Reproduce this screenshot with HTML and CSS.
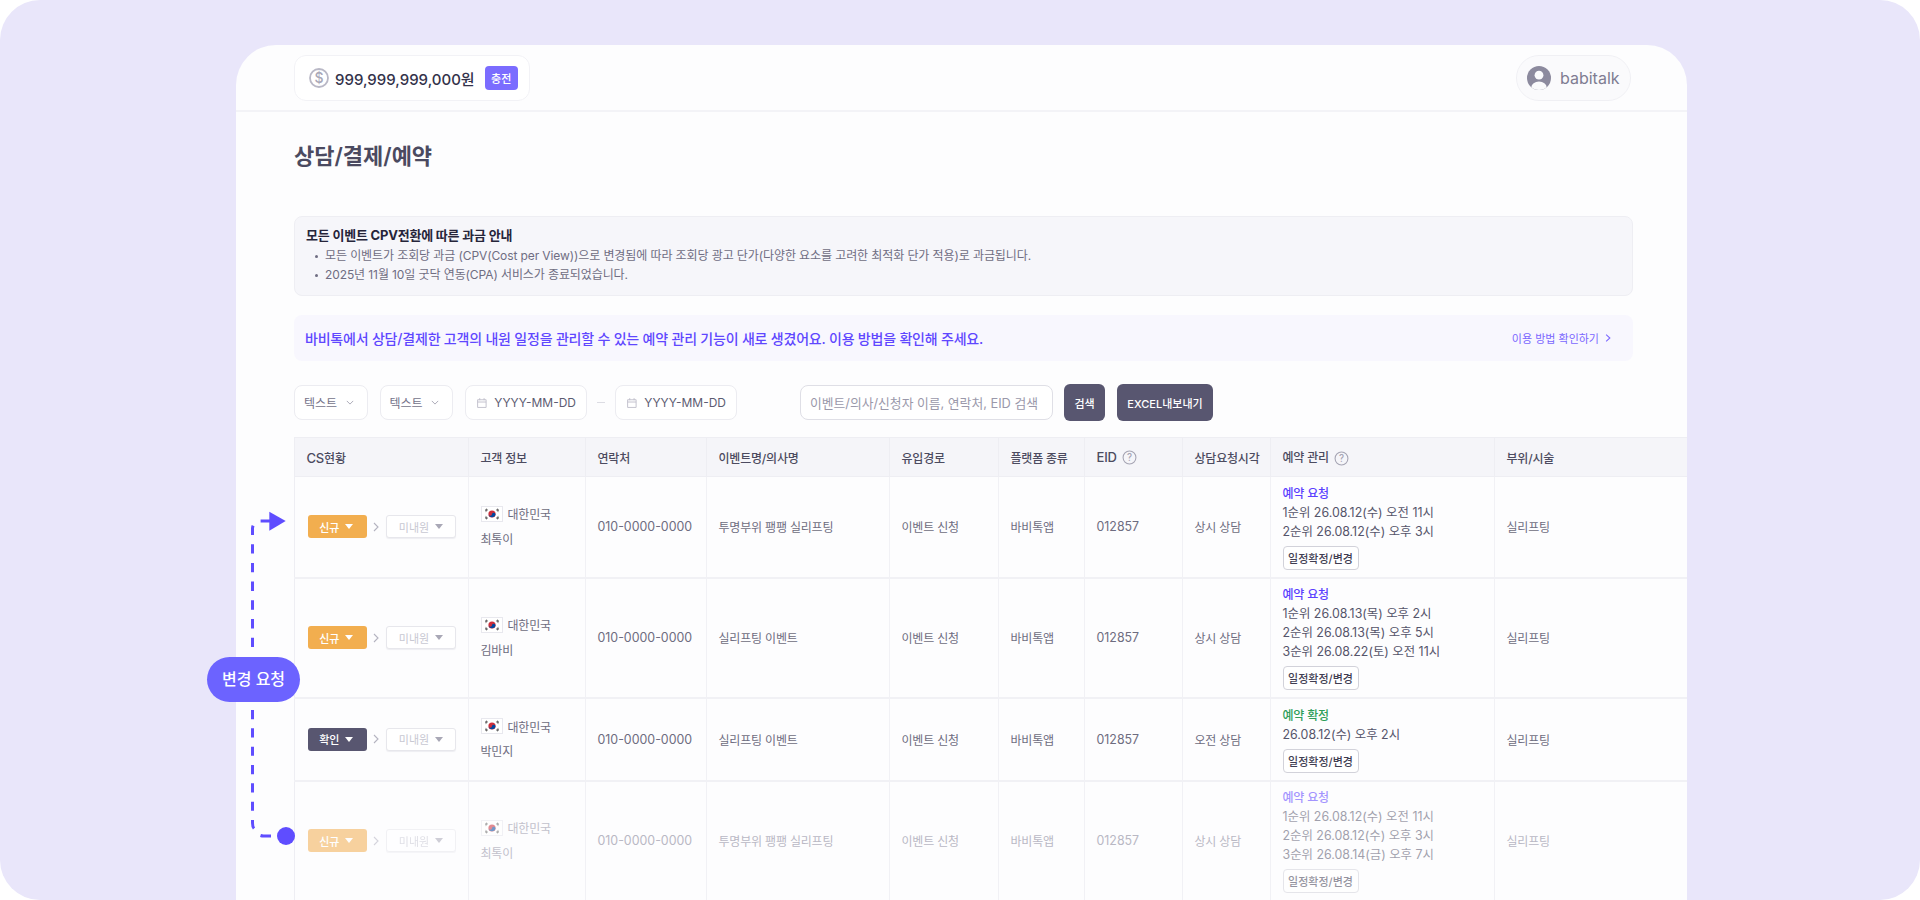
FILE: index.html
```html
<!DOCTYPE html>
<html lang="ko">
<head>
<meta charset="utf-8">
<title>상담/결제/예약</title>
<link rel="stylesheet" href="styles.css">
</head>
<body>
<div class="stage">
  <main class="window">
    <header class="topbar">
      <div class="wallet">
        <svg class="coin" viewBox="0 0 20 20" width="20" height="20"><circle cx="10" cy="10" r="9" fill="none" stroke="#b9b8c6" stroke-width="1.800"/><text x="10" y="14.800" text-anchor="middle" class="coin-text">$</text></svg>
        <span class="amount">999,999,999,000원</span>
        <button class="charge">충전</button>
      </div>
      <div class="user">
        <svg viewBox="0 0 24 24" width="24" height="24"><defs><clipPath id="uc"><circle cx="12" cy="12" r="12"/></clipPath></defs><circle cx="12" cy="12" r="12" fill="#8c8a9e"/><g clip-path="url(#uc)"><circle cx="12" cy="9.200" r="4.400" fill="#fafafc"/><ellipse cx="12" cy="21" rx="7.600" ry="5.400" fill="#fafafc"/></g></svg>
        <span>babitalk</span>
      </div>
    </header>
    <section class="content">
      <h1 class="title">상담/결제/예약</h1>
      <div class="notice">
        <strong>모든 이벤트 CPV전환에 따른 과금 안내</strong>
        <ul>
          <li>모든 이벤트가 조회당 과금 (CPV(Cost per View))으로 변경됨에 따라 조회당 광고 단가(다양한 요소를 고려한 최적화 단가 적용)로 과금됩니다.</li>
          <li>2025년 11월 10일 굿닥 연동(CPA) 서비스가 종료되었습니다.</li>
        </ul>
      </div>
      <div class="banner">
        <span class="banner-text">바비톡에서 상담/결제한 고객의 내원 일정을 관리할 수 있는 예약 관리 기능이 새로 생겼어요. 이용 방법을 확인해 주세요.</span>
        <a class="banner-link">이용 방법 확인하기
          <svg viewBox="0 0 8 12" width="6" height="10"><path d="M1.500 1.500 6.500 6l-5 4.500" fill="none" stroke="#7a66ff" stroke-width="1.400"/></svg>
        </a>
      </div>
      <div class="filters">
        <div class="control select">텍스트<svg viewBox="0 0 10 6" width="8" height="5"><path d="M1 1l4 4 4-4" fill="none" stroke="#a9a8b6" stroke-width="1.200"/></svg></div>
        <div class="control select">텍스트<svg viewBox="0 0 10 6" width="8" height="5"><path d="M1 1l4 4 4-4" fill="none" stroke="#a9a8b6" stroke-width="1.200"/></svg></div>
        <div class="control date"><svg viewBox="0 0 14 14" width="14" height="14"><path d="M2 3h10.500v9.500H2zM2 5.800h10.500M4.600 1v2.500M10 1v2.500" fill="none" stroke="#bdbcc9" stroke-width="1.100"/></svg>YYYY-MM-DD</div>
        <span class="dash"></span>
        <div class="control date"><svg viewBox="0 0 14 14" width="14" height="14"><path d="M2 3h10.500v9.500H2zM2 5.800h10.500M4.600 1v2.500M10 1v2.500" fill="none" stroke="#bdbcc9" stroke-width="1.100"/></svg>YYYY-MM-DD</div>
        <div class="control search">이벤트/의사/신청자 이름, 연락처, EID 검색</div>
        <button class="action search-btn">검색</button>
        <button class="action excel">EXCEL내보내기</button>
      </div>
      <table class="grid">
        <colgroup>
          <col class="c1"><col class="c2"><col class="c3"><col class="c4"><col class="c5"><col class="c6"><col class="c7"><col class="c8"><col class="c9"><col class="c10">
        </colgroup>
        <thead>
          <tr>
            <th><span class="lat">CS</span>현황</th><th>고객 정보</th><th>연락처</th><th>이벤트명/의사명</th><th>유입경로</th><th>플랫폼 종류</th>
            <th><span class="lat">EID</span> <svg class="help" viewBox="0 0 14 14" width="15" height="15"><circle cx="7" cy="7" r="6" fill="none" stroke="#a5a4b3"/><text x="7" y="10" text-anchor="middle" class="help-text">?</text></svg></th>
            <th>상담요청시각</th>
            <th>예약 관리 <svg class="help" viewBox="0 0 14 14" width="15" height="15"><circle cx="7" cy="7" r="6" fill="none" stroke="#a5a4b3"/><text x="7" y="10" text-anchor="middle" class="help-text">?</text></svg></th>
            <th>부위/시술</th>
          </tr>
        </thead>
        <tbody>
          <tr class="r1">
            <td><div class="status"><span class="chip new">신규<i class="caret"></i></span><svg class="next" viewBox="0 0 6 10" width="6" height="10"><path d="M1 1l4 4-4 4" fill="none" stroke="#b4b3c0" stroke-width="1.100"/></svg><span class="chip off">미내원<i class="caret"></i></span></div></td>
            <td><div class="country"><svg class="flag" viewBox="0 0 22 16" width="22" height="16"><use href="#kr"/></svg>대한민국</div><div class="person">최톡이</div></td>
            <td class="num">010-0000-0000</td><td>투명부위 팽팽 실리프팅</td><td>이벤트 신청</td><td>바비톡앱</td><td class="num">012857</td><td>상시 상담</td>
            <td><div class="res"><b class="req">예약 요청</b><p>1순위 26.08.12(수) 오전 11시</p><p>2순위 26.08.12(수) 오후 3시</p><button class="manage">일정확정/변경</button></div></td>
            <td>실리프팅</td>
          </tr>
          <tr class="r2">
            <td><div class="status"><span class="chip new">신규<i class="caret"></i></span><svg class="next" viewBox="0 0 6 10" width="6" height="10"><path d="M1 1l4 4-4 4" fill="none" stroke="#b4b3c0" stroke-width="1.100"/></svg><span class="chip off">미내원<i class="caret"></i></span></div></td>
            <td><div class="country"><svg class="flag" viewBox="0 0 22 16" width="22" height="16"><use href="#kr"/></svg>대한민국</div><div class="person">김바비</div></td>
            <td class="num">010-0000-0000</td><td>실리프팅 이벤트</td><td>이벤트 신청</td><td>바비톡앱</td><td class="num">012857</td><td>상시 상담</td>
            <td><div class="res"><b class="req">예약 요청</b><p>1순위 26.08.13(목) 오후 2시</p><p>2순위 26.08.13(목) 오후 5시</p><p>3순위 26.08.22(토) 오전 11시</p><button class="manage">일정확정/변경</button></div></td>
            <td>실리프팅</td>
          </tr>
          <tr class="r3">
            <td><div class="status"><span class="chip seen">확인<i class="caret"></i></span><svg class="next" viewBox="0 0 6 10" width="6" height="10"><path d="M1 1l4 4-4 4" fill="none" stroke="#b4b3c0" stroke-width="1.100"/></svg><span class="chip off">미내원<i class="caret"></i></span></div></td>
            <td><div class="country"><svg class="flag" viewBox="0 0 22 16" width="22" height="16"><use href="#kr"/></svg>대한민국</div><div class="person">박민지</div></td>
            <td class="num">010-0000-0000</td><td>실리프팅 이벤트</td><td>이벤트 신청</td><td>바비톡앱</td><td class="num">012857</td><td>오전 상담</td>
            <td><div class="res"><b class="ok">예약 확정</b><p>26.08.12(수) 오후 2시</p><button class="manage">일정확정/변경</button></div></td>
            <td>실리프팅</td>
          </tr>
          <tr class="r4 faded">
            <td><div class="status"><span class="chip new">신규<i class="caret"></i></span><svg class="next" viewBox="0 0 6 10" width="6" height="10"><path d="M1 1l4 4-4 4" fill="none" stroke="#b4b3c0" stroke-width="1.100"/></svg><span class="chip off">미내원<i class="caret"></i></span></div></td>
            <td><div class="country"><svg class="flag" viewBox="0 0 22 16" width="22" height="16"><use href="#kr"/></svg>대한민국</div><div class="person">최톡이</div></td>
            <td class="num">010-0000-0000</td><td>투명부위 팽팽 실리프팅</td><td>이벤트 신청</td><td>바비톡앱</td><td class="num">012857</td><td>상시 상담</td>
            <td><div class="res"><b class="req">예약 요청</b><p>1순위 26.08.12(수) 오전 11시</p><p>2순위 26.08.12(수) 오후 3시</p><p>3순위 26.08.14(금) 오후 7시</p><button class="manage">일정확정/변경</button></div></td>
            <td>실리프팅</td>
          </tr>
        </tbody>
      </table>
    </section>
  </main>
  <svg class="flow" viewBox="230 505 70 340" width="70" height="340">
    <path d="M270 521H260a7.500 7.500 0 0 0-7.500 7.500V655" class="flow-line"/>
    <path d="M252.500 710V820" class="flow-line low"/>
    <path d="M252.500 820v3q0 4 1.500 5.500" class="flow-solid"/>
    <path d="M260.500 835.500q1.500 .5 3 .5H271" class="flow-solid"/>
    <path d="M269.300 511.700 285.700 521 269.300 530.700z" class="flow-fill"/>
    <circle cx="286" cy="836" r="9" class="flow-fill"/>
  </svg>
  <div class="tag">변경 요청</div>
  <svg class="defs" width="0" height="0">
    <symbol id="kr" viewBox="0 0 22 16">
      <rect x=".5" y=".5" width="21" height="15" fill="#fff" stroke="#e8e8ee"/>
      <circle cx="11" cy="8" r="3.600" fill="#cd2e3a"/>
      <path d="M7.500 8.600a3.600 3.600 0 0 0 7 0 1.800 1.800 0 0 0-3.500-.6 1.800 1.800 0 0 1-3.500.6z" fill="#0047a0"/>
      <g stroke="#333" stroke-width="1"><path d="M4 4.500 6 2.800M4.700 5.500l2-1.700M16 2.800l2 1.700M15.300 3.800l2 1.700M4 11.500l2 1.700M4.700 10.500l2 1.700M18 11.500l-2 1.700M17.300 10.500l-2 1.700"/></g>
    </symbol>
  </svg>
</div>
</body>
</html>
```
FILE: styles.css
```css
* { box-sizing: border-box; }
html, body { margin: 0; padding: 0; }
body {
  width: 1920px;
  height: 900px;
  overflow: hidden;
  background: #fff;
  font-family: Inter, "Noto Sans CJK KR", "Noto Sans", sans-serif;
  color: #6e6c80;
}
.stage {
  position: relative;
  width: 1920px;
  height: 900px;
  padding: 45px 233px 0 236px;
  background: #e9e6fa;
  border-radius: 40px;
  overflow: hidden;
}
.window {
  width: 1451px;
  height: 855px;
  background: #fdfdfe;
  border-radius: 40px 40px 0 0;
  overflow: hidden;
}
.topbar {
  height: 67px;
  padding: 10px 56px 9px 58px;
  display: flex;
  justify-content: space-between;
  align-items: flex-start;
  border-bottom: 2px solid #f3f3f7;
}
.wallet {
  width: 236px;
  height: 46px;
  display: flex;
  align-items: center;
  padding-left: 14px;
  border: 1px solid #f2f2f6;
  border-radius: 12px;
  background: #fff;
}
.coin-text { font-size: 14px; fill: #a9a8b8; font-weight: 500; }
.amount { margin-left: 6px; font-size: 15px; font-weight: 500; color: #33324a; }
.charge {
  margin-left: 10px;
  width: 33px;
  height: 24px;
  padding: 0;
  border: 0;
  border-radius: 4px;
  background: #7b6cff;
  color: #fff;
  font: 500 11px Inter, "Noto Sans CJK KR", sans-serif;
}
.user {
  width: 115px;
  height: 46px;
  display: flex;
  align-items: center;
  gap: 9px;
  padding-left: 10px;
  border: 1px solid #f0f0f4;
  border-radius: 23px;
  background: #fafafc;
  font-size: 16px;
  color: #7f7d92;
}
.content { padding: 0 0 0 58px; }
.title {
  margin: 27px 0 0;
  height: 34px;
  font-size: 22px;
  line-height: 34px;
  font-weight: 600;
  color: #4b4a60;
}
.notice {
  width: 1339px;
  height: 80px;
  margin-top: 43px;
  padding: 9px 11px;
  background: #f6f6fa;
  border: 1px solid #eeeef3;
  border-radius: 8px;
}
.notice strong { display: block; font-size: 13px; line-height: 19px; font-weight: 700; color: #26253a; letter-spacing: -.2px; }
.notice ul { margin: 1px 0 0; padding: 0 0 0 19px; list-style: none; }
.notice li { position: relative; font-size: 12px; line-height: 19px; color: #6f6d82; letter-spacing: -.1px; }
.notice li::before {
  content: "";
  position: absolute;
  left: -10px;
  top: 9px;
  width: 3px;
  height: 3px;
  border-radius: 50%;
  background: #6f6d82;
}
.banner {
  width: 1339px;
  height: 46px;
  margin-top: 19px;
  padding: 0 22px 0 11px;
  display: flex;
  justify-content: space-between;
  align-items: center;
  border-radius: 8px;
  background: #f8f7fe;
}
.banner-text { font-size: 14px; font-weight: 500; color: #5f47ff; letter-spacing: -.2px; }
.banner-link { display: flex; align-items: center; gap: 6px; font-size: 11px; color: #7a66ff; }
.filters { display: flex; align-items: center; margin-top: 23px; padding-bottom: 16px; }
.control {
  height: 35px;
  display: flex;
  align-items: center;
  background: #fff;
  border: 1px solid #ececf1;
  border-radius: 8px;
  font-size: 12px;
  color: #75738a;
  white-space: nowrap;
}
.select { width: 73.500px; padding: 0 13px 0 9px; justify-content: space-between; margin-right: 12px; }
.date { width: 122px; padding: 0 10px; gap: 7px; color: #5d5c72; }
.dash { width: 8px; height: 1px; margin: 0 10px; background: #dcdce3; }
.search { width: 253px; margin-left: 63px; padding: 0 9px; border-color: #dfdfe6; font-size: 12.800px; color: #9a98aa; }
.action {
  height: 37px;
  margin-left: 11px;
  padding: 0;
  border: 0;
  border-radius: 6px;
  background: #585670;
  color: #fff;
  font: 500 11px Inter, "Noto Sans CJK KR", sans-serif;
}
.search-btn { width: 41px; }
.excel { width: 96px; margin-left: 12px; }
.grid {
  width: 1393px;
  table-layout: fixed;
  border-collapse: collapse;
  border-top: 1px solid #eeeef3;
  border-left: 1px solid #eeeef3;
  font-size: 12px;
  letter-spacing: -.2px;
}
.c1 { width: 174px; } .c2 { width: 117px; } .c3 { width: 121px; } .c4 { width: 183px; } .c5 { width: 109px; }
.c6 { width: 86px; } .c7 { width: 98px; } .c8 { width: 88px; } .c9 { width: 224px; } .c10 { width: 193px; }
.grid th {
  height: 39px;
  padding: 0 11.500px;
  text-align: left;
  font-weight: 500;
  font-size: 12px;
  color: #4c4b60;
  background: #f5f5f9;
  border-right: 1px solid #eeeef3;
  border-bottom: 1px solid #eeeef3;
  white-space: nowrap;
}
.lat { font-size: 13px; }
.grid td {
  padding: 0 11.500px;
  border-right: 1px solid #f1f1f5;
  border-bottom: 2px solid #f1f1f5;
  color: #6e6c80;
  white-space: nowrap;
  vertical-align: middle;
}
.grid td.num { font-size: 12.400px; letter-spacing: 0; }
.help { vertical-align: -3.500px; margin-left: 2px; }
.help-text { font-size: 9px; fill: #a5a4b3; }
.r1 td { height: 101px; }
.r2 td { height: 120px; }
.r3 td { height: 83px; }
.r4 td { height: 120px; }
.grid .faded td { color: #b9b8c4; }
.faded .status, .faded .flag, .faded .res { opacity: .55; }
.faded .country, .faded .person { color: #c2c1cc; }
.status { display: flex; align-items: center; }
.chip {
  height: 23px;
  display: flex;
  align-items: center;
  justify-content: center;
  gap: 6px;
  border-radius: 3px;
  font-size: 11px;
  font-weight: 500;
  letter-spacing: 0;
}
.chip.new { width: 58.500px; margin-left: 1.500px; padding-right: 2px; background: #f2ae4f; color: #fff; }
.chip.seen { width: 58.500px; margin-left: 1.500px; padding-right: 2px; background: #585670; color: #fff; }
.chip.off { width: 70px; background: #fff; border: 1px solid #e7e7ec; box-shadow: 0 1px 1px #eeeef2; color: #c8c8d2; font-weight: 400; }
.caret { width: 0; height: 0; border: 4px solid transparent; border-top: 5px solid currentColor; border-bottom: 0; }
.chip.off .caret { color: #a9a8b6; }
.next { margin: 0 7px 0 6.500px; }
.country { display: flex; align-items: center; gap: 5px; height: 22px; }
.person { margin-top: 3px; line-height: 23px; }
.res { display: flex; flex-direction: column; align-items: flex-start; }
.res b { font-size: 12px; line-height: 19px; font-weight: 500; }
.res p { margin: 0; font-size: 12.400px; line-height: 19px; letter-spacing: 0; color: #55546a; }
.req { color: #5b3fff; }
.ok { color: #2f9e5a; }
.manage {
  width: 76px;
  height: 24px;
  margin-top: 5px;
  padding: 0;
  background: #fff;
  border: 1px solid #d2d2da;
  border-radius: 4px;
  font: 500 11px Inter, "Noto Sans CJK KR", sans-serif;
  color: #3f3e52;
}
.flow { position: absolute; left: 230px; top: 505px; overflow: visible; }
.flow-line { fill: none; stroke: #5f4dff; stroke-width: 3; stroke-dasharray: 9.400 9.300; }
.flow-line.low { stroke-dasharray: 9.200 9.130; }
.flow-solid { fill: none; stroke: #5f4dff; stroke-width: 3; }
.flow-fill { fill: #5f4dff; }
.tag {
  position: absolute;
  left: 207px;
  top: 657px;
  width: 93px;
  height: 45px;
  border-radius: 23px;
  background: #6c63ff;
  color: #fff;
  font-size: 16px;
  font-weight: 500;
  line-height: 45px;
  text-align: center;
}
.defs { position: absolute; }
```
